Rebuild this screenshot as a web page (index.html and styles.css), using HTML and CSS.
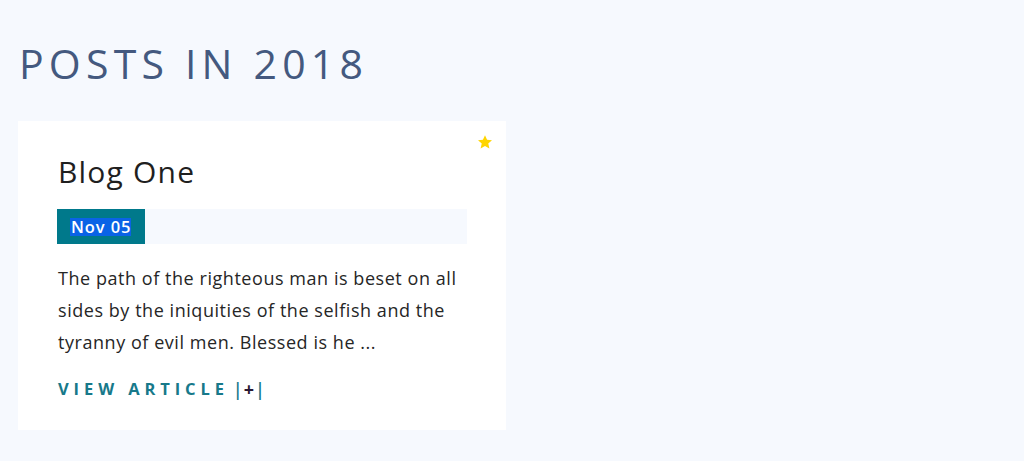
FILE: index.html
```html
<!DOCTYPE html>
<html>
<head>
<meta charset="utf-8">
<link rel="stylesheet" href="styles.css">
</head>
<body>
<main class="page">
  <h1 class="title">POSTS IN 2018</h1>
  <article class="card">
    <span class="star">
      <svg width="16" height="16" viewBox="0 0 24 24"><path fill="#ffd500" d="M12 1.8l3.1 6.9 7.4.7-5.6 5 1.7 7.4L12 17.9l-6.6 3.9 1.7-7.4-5.6-5 7.4-.7z"/></svg>
    </span>
    <h2 class="card-title">Blog One</h2>
    <div class="date-bar"><span class="date"><span class="date-text">Nov 05</span></span></div>
    <p class="excerpt">The path of the righteous man is beset on all sides by the iniquities of the selfish and the tyranny of evil men. Blessed is he ...</p>
    <a class="more" href="#"><span>VIEW ARTICLE</span><span class="plus"><i>|</i><b>+</b><i>|</i></span></a>
  </article>
</main>
</body>
</html>
```
FILE: styles.css
```css
html, body {
  margin: 0;
  padding: 0;
  background: #f6f9fe;
}
body {
  font-family: "Open Sans", "Noto Sans", sans-serif;
  color: #222;
}
.page {
  padding: 39px 18px;
}
.title {
  margin: 0 0 34px 1px;
  font-weight: 400;
  font-size: 41px;
  line-height: 48px;
  letter-spacing: 5.2px;
  color: #44597f;
}
.card {
  position: relative;
  box-sizing: border-box;
  width: 488px;
  height: 309px;
  background: #fff;
  padding: 30px 39px 0 39px;
}
.star {
  position: absolute;
  top: 13px;
  right: 13px;
  line-height: 0;
}
.card-title {
  margin: 0 0 16px 1px;
  font-size: 30px;
  font-weight: 400;
  line-height: 42px;
  letter-spacing: 1.2px;
  color: #1f1f1f;
}
.date-bar {
  height: 35px;
  background: #f6f9fe;
  display: flex;
}
.date {
  background: #00798b;
  width: 88px;
  display: flex;
  align-items: center;
  padding-left: 13px;
  box-sizing: border-box;
}
.date-text {
  display: inline-block;
  background: #0a63e6;
  color: #fff;
  font-size: 16.5px;
  font-weight: 600;
  line-height: 18px;
  letter-spacing: 0.9px;
  padding-left: 1px;
}
.excerpt {
  margin: 18px 0 0 1px;
  font-size: 18px;
  line-height: 32px;
  letter-spacing: 0.55px;
  color: #262626;
}
.more {
  display: flex;
  align-items: center;
  width: max-content;
  margin: 20px 0 0 1px;
  color: #17798a;
  text-decoration: none;
  font-weight: 700;
  font-size: 16.5px;
  line-height: 22px;
  letter-spacing: 4.9px;
}
.plus {
  display: flex;
  align-items: center;
  margin-left: 4px;
  letter-spacing: 0;
}
.plus i {
  font-style: normal;
  font-weight: 600;
  font-size: 18px;
  color: #17798a;
}
.plus b {
  color: #2a1833;
  font-weight: 700;
  font-size: 18px;
  margin: 0 1px;
}
```
